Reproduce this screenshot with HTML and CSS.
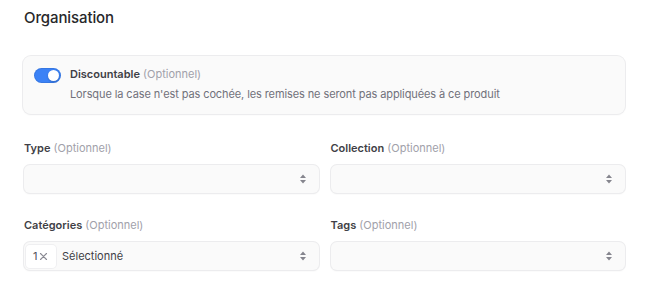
FILE: index.html
```html
<!DOCTYPE html>
<html lang="fr">
<head>
<meta charset="utf-8">
<link rel="stylesheet" href="styles.css">
</head>
<body>
<div class="page">
  <h2 class="title">Organisation</h2>
  <div class="card">
    <span class="switch"><span class="knob"></span></span>
    <div class="card-text">
      <div class="card-label"><span class="strong">Discountable</span> <span class="opt">(Optionnel)</span></div>
      <div class="card-desc">Lorsque la case n'est pas cochée, les remises ne seront pas appliquées à ce produit</div>
    </div>
  </div>
  <div class="grid">
    <div class="field">
      <div class="label"><span class="strong">Type</span> <span class="opt">(Optionnel)</span></div>
      <div class="select"><span class="value"></span><svg class="chev" width="8" height="12" viewBox="0 0 8 12"><path d="M1 5 L4 1.6 L7 5 Z M1 7 L4 10.4 L7 7 Z" fill="#85858e"/></svg></div>
    </div>
    <div class="field">
      <div class="label"><span class="strong">Collection</span> <span class="opt">(Optionnel)</span></div>
      <div class="select"><span class="value"></span><svg class="chev" width="8" height="12" viewBox="0 0 8 12"><path d="M1 5 L4 1.6 L7 5 Z M1 7 L4 10.4 L7 7 Z" fill="#85858e"/></svg></div>
    </div>
    <div class="field">
      <div class="label"><span class="strong">Catégories</span> <span class="opt">(Optionnel)</span></div>
      <div class="select"><span class="chip">1<svg class="x" width="9" height="9" viewBox="0 0 9 9"><path d="M1.5 1.5 L7.5 7.5 M7.5 1.5 L1.5 7.5" stroke="#8a8a93" stroke-width="1.1" stroke-linecap="round"/></svg></span><span class="value">Sélectionné</span><svg class="chev" width="8" height="12" viewBox="0 0 8 12"><path d="M1 5 L4 1.6 L7 5 Z M1 7 L4 10.4 L7 7 Z" fill="#85858e"/></svg></div>
    </div>
    <div class="field">
      <div class="label"><span class="strong">Tags</span> <span class="opt">(Optionnel)</span></div>
      <div class="select"><span class="value"></span><svg class="chev" width="8" height="12" viewBox="0 0 8 12"><path d="M1 5 L4 1.6 L7 5 Z M1 7 L4 10.4 L7 7 Z" fill="#85858e"/></svg></div>
    </div>
  </div>
</div>
</body>
</html>
```

FILE: styles.css
```css
* { box-sizing: border-box; }
html, body { margin: 0; padding: 0; background: #ffffff; }
body {
  font-family: Inter, "Noto Sans", sans-serif;
  color: #18181b;
  width: 646px;
  height: 291px;
  overflow: hidden;
}
.page {
  padding: 8px 21px 0 23px;
}
.title {
  margin: 0 0 0 1px;
  font-size: 15px;
  line-height: 20px;
  font-weight: 500;
  color: #27272a;
  letter-spacing: -0.1px;
}
.card {
  margin-top: 28px;
  height: 58px;
  background: #fafafa;
  border-radius: 8px;
  box-shadow: 0 0 0 1px #ececee, 0 1px 2px rgba(0,0,0,0.06);
  display: flex;
  align-items: flex-start;
  padding: 12px 12px 0 11px;
  gap: 9px;
}
.switch {
  flex: none;
  width: 27px;
  height: 15px;
  border-radius: 8px;
  background: #3b82f6;
  position: relative;
  box-shadow: inset 0 0 0 1px rgba(0,0,0,0.08);
}
.knob {
  position: absolute;
  right: 2px;
  top: 2px;
  width: 11px;
  height: 11px;
  border-radius: 50%;
  background: #ffffff;
  box-shadow: 0 1px 2px rgba(0,0,0,0.2);
}
.card-text { display: flex; flex-direction: column; gap: 5px; margin-top: -1px; }
.card-label, .label {
  font-size: 11px;
  line-height: 15px;
}
.strong { font-weight: 600; color: #3f3f46; }
.opt { color: #a1a1aa; font-weight: 400; }
.card-desc {
  font-size: 11px;
  line-height: 15px;
  color: #71717a;
  letter-spacing: -0.1px;
}
.grid {
  margin-top: 27px;
  display: grid;
  grid-template-columns: 1fr 1fr;
  column-gap: 11px;
  row-gap: 25px;
}
.field { display: flex; flex-direction: column; gap: 9px; }
.label { padding-left: 1px; }
.select {
  height: 28px;
  margin-left: 1px;
  background: #fafafa;
  border-radius: 6px;
  box-shadow: 0 0 0 1px #ececee, 0 1px 2px rgba(0,0,0,0.07);
  display: flex;
  align-items: center;
  padding: 0 12px 0 2px;
}
.value {
  flex: 1;
  font-size: 11px;
  color: #3f3f46;
}
.chip {
  display: flex;
  align-items: center;
  gap: 2px;
  height: 23px;
  width: 30px;
  padding: 0 0 0 7px;
  background: #ffffff;
  border-radius: 4px;
  box-shadow: 0 0 0 1px #efeff1;
  font-size: 11px;
  color: #52525b;
  margin-right: 6px;
}
.chev { flex: none; }
```
